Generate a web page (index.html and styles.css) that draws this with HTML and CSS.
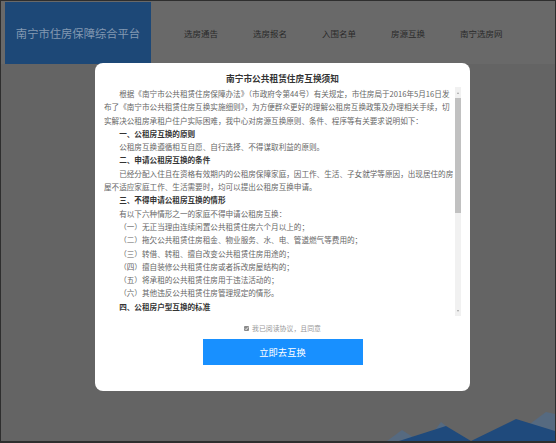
FILE: index.html
```html
<!DOCTYPE html>
<html lang="zh-CN">
<head>
<meta charset="utf-8">
<title>南宁市住房保障综合平台</title>
<link rel="stylesheet" href="styles.css">
</head>
<body>
<div class="screen">
  <header class="topbar">
    <div class="logo">南宁市住房保障综合平台</div>
    <nav class="nav">
      <a class="nav-item">选房通告</a>
      <a class="nav-item">选房报名</a>
      <a class="nav-item">入围名单</a>
      <a class="nav-item">房源互换</a>
      <a class="nav-item">南宁选房网</a>
    </nav>
  </header>
  <main class="page"></main>
  <svg class="mountains" width="176" height="30" viewBox="0 0 176 30">
    <polygon fill="#566a80" points="8,30 23,19 40,30"/>
    <polygon fill="#566a80" points="48,30 62,11 86,30"/>
    <polygon fill="#566a80" points="128,30 167,1 176,3 176,30"/>
    <polygon fill="#1f4a7c" points="20,30 67,15 92,30 137,8 176,20 176,30"/>
  </svg>
  <div class="modal">
    <h2 class="modal-title">南宁市公共租赁住房互换须知</h2>
    <div class="notice">
      <div class="notice-text">
        <p class="para indent">根据《南宁市公共租赁住房保障办法》（市政府令第44号）有关规定，市住房局于2016年5月16日发<br>布了《南宁市公共租赁住房互换实施细则》，为方便群众更好的理解公租房互换政策及办理相关手续，切<br>实解决公租房承租户住户实际困难，我中心对房源互换原则、条件、程序等有关要求说明如下：</p>
        <p class="head indent">一、公租房互换的原则</p>
        <p class="para indent">公租房互换遵循相互自愿、自行选择、不得谋取利益的原则。</p>
        <p class="head indent">二、申请公租房互换的条件</p>
        <p class="para indent">已经分配入住且在资格有效期内的公租房保障家庭，因工作、生活、子女就学等原因，出现居住的房<br>屋不适应家庭工作、生活需要时，均可以提出公租房互换申请。</p>
        <p class="head indent">三、不得申请公租房互换的情形</p>
        <p class="para indent">有以下六种情形之一的家庭不得申请公租房互换：</p>
        <p class="para indent">（一）无正当理由连续闲置公共租赁住房六个月以上的；</p>
        <p class="para indent">（二）拖欠公共租赁住房租金、物业服务、水、电、管道燃气等费用的；</p>
        <p class="para indent">（三）转借、转租、擅自改变公共租赁住房用途的；</p>
        <p class="para indent">（四）擅自装修公共租赁住房或者拆改房屋结构的；</p>
        <p class="para indent">（五）将承租的公共租赁住房用于违法活动的；</p>
        <p class="para indent">（六）其他违反公共租赁住房管理规定的情形。</p>
        <p class="head indent">四、公租房户型互换的标准</p>
      </div>
      <div class="scrollbar">
        <span class="arrow arrow-up"></span>
        <span class="thumb"></span>
        <span class="track-rest"></span>
        <span class="arrow arrow-down"></span>
      </div>
    </div>
    <label class="agree"><span class="check"><svg width="5" height="5" viewBox="0 0 5 5"><path d="M1 2.6 L2.1 3.7 L4.1 1.3" fill="none" stroke="#fff" stroke-width="0.9"/></svg></span>我已阅读协议，且同意</label>
    <button class="go" type="button">立即去互换</button>
  </div>
</div>
</body>
</html>
```

FILE: styles.css
```css
* {
  box-sizing: border-box;
}
html, body {
  margin: 0;
  padding: 0;
}
body {
  font-family: "Noto Sans CJK SC", "Microsoft YaHei", sans-serif;
  background: #333;
}
.screen {
  position: relative;
  width: 556px;
  height: 443px;
  border: 1px solid #2e2e2e;
  border-bottom-width: 2px;
  background: #646464;
  overflow: hidden;
  display: flex;
  flex-direction: column;
}
.topbar {
  height: 63px;
  background: #696969;
  display: flex;
  align-items: stretch;
  padding-left: 4px;
  flex-shrink: 0;
}
.logo {
  width: 146px;
  margin-top: 1px;
  background: #1d4877;
  color: #8399b2;
  font-size: 11.3px;
  display: flex;
  align-items: center;
  justify-content: center;
  white-space: nowrap;
}
.nav {
  display: flex;
  align-items: center;
  gap: 35px;
  margin-left: 33px;
}
.nav-item {
  font-size: 8.5px;
  color: #2a2a2a;
  white-space: nowrap;
}
.page {
  flex: 1;
}
.mountains {
  position: absolute;
  right: 0;
  bottom: 0;
  display: block;
}
.modal {
  position: absolute;
  left: 94px;
  top: 62px;
  width: 375px;
  height: 328px;
  background: #fff;
  border-radius: 8px;
  display: flex;
  flex-direction: column;
  align-items: center;
}
.modal-title {
  margin: 0;
  padding-top: 10px;
  font-size: 8.7px;
  line-height: 12px;
  font-weight: bold;
  color: #333;
}
.notice {
  align-self: stretch;
  margin-top: 2px;
  height: 229px;
  display: flex;
  padding-left: 9px;
  padding-right: 9px;
}
.notice-text {
  flex: 1;
  overflow: hidden;
  font-size: 7.6px;
  line-height: 13.3px;
  color: #666;
  white-space: nowrap;
}
.notice-text p {
  margin: 0;
}
.indent {
  text-indent: 2em;
}
.head {
  color: #333;
  font-weight: bold;
}
.scrollbar {
  width: 6px;
  background: #f1f1f1;
  display: flex;
  flex-direction: column;
  align-items: center;
}
.arrow {
  width: 0;
  height: 0;
  border-left: 1.5px solid transparent;
  border-right: 1.5px solid transparent;
  flex-shrink: 0;
}
.arrow-up {
  margin-top: 5px;
  border-bottom: 2px solid #a3a3a3;
}
.arrow-down {
  margin-bottom: 4px;
  border-top: 2px solid #a3a3a3;
}
.thumb {
  width: 6px;
  height: 115px;
  margin-top: 4px;
  background: #c1c1c1;
}
.track-rest {
  flex: 1;
}
.agree {
  margin-top: 6px;
  height: 12px;
  display: flex;
  align-items: center;
  gap: 3px;
  font-size: 6.9px;
  color: #999;
  white-space: nowrap;
}
.check {
  width: 5px;
  height: 5px;
  background: #8a8a8a;
  border-radius: 1px;
  display: flex;
}
.check svg {
  display: block;
}
.go {
  margin-top: 5px;
  width: 160px;
  height: 26px;
  border: 0;
  background: #1890ff;
  color: #fff;
  font-family: inherit;
  font-size: 9.3px;
  padding: 0;
  cursor: pointer;
}
```
